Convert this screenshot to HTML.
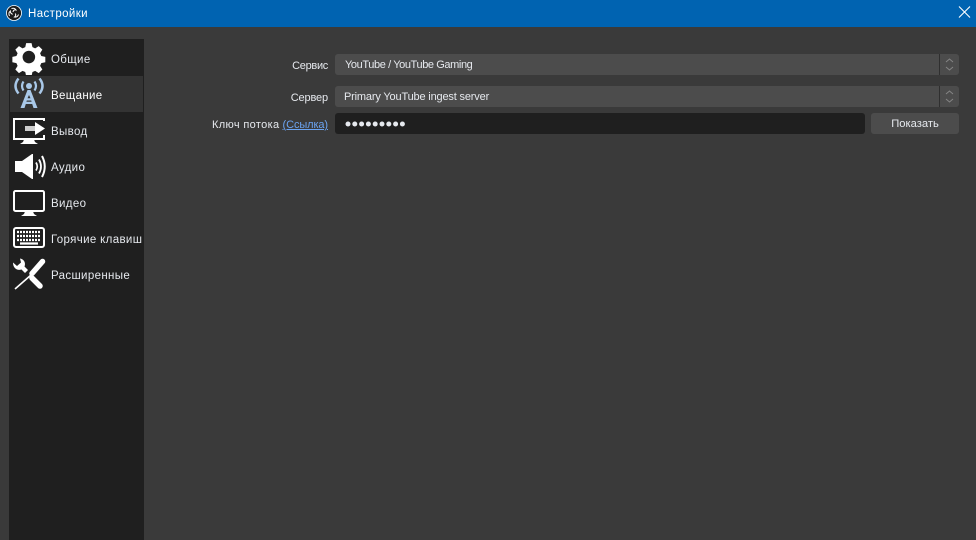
<!DOCTYPE html>
<html><head><meta charset="utf-8"><style>
html,body{margin:0;padding:0;background:#3a3a3a}
#r{position:relative;width:976px;height:540px;overflow:hidden;background:#3a3a3a;font-family:"Liberation Sans",sans-serif;font-size:11.5px;color:#e6e9ee}
#r div{position:absolute;white-space:nowrap}
.t{line-height:16px}
.n{left:51px;letter-spacing:.35px}
.i{position:absolute;left:12px}
.lb{right:648px;text-align:right;font-size:11px}
.c{left:335px;width:624px;height:21px;background:#4c4c4c;border-radius:3px}
.v{left:10px;line-height:23px;font-size:11px}
.s{left:604px;top:0;width:1px;height:21px;background:#2f2f2f}
</style></head><body><div id="r">
<div style="left:0;top:0;width:976px;height:27px;background:#0063b1"></div>
<svg class="i" style="left:6px;top:5px" width="16" height="16" viewBox="0 0 16 16"><circle cx="8" cy="8" r="7.5" fill="#1c1c1c" stroke="#fff" stroke-width=".8"/><g fill="none" stroke="#fff" stroke-width="1"><path d="M5.500 3.500q3-1 4.500 1.500q-2.500-.5-3 2"/><path d="M12.500 9.500q-1 3-4 2.500q2-1.500 .8-3.500"/><path d="M3.500 11q-1.500-3 .8-5q0 2.500 2.500 3.300"/></g></svg>
<div class="t" style="left:28px;top:6px;color:#fff;font-size:11.5px;letter-spacing:.4px">Настройки</div>
<svg class="i" style="left:958px;top:6px" width="13" height="13" viewBox="0 0 13 13"><path d="M1 .5l11 11M12 .5l-11 11" stroke="#fff" stroke-width="1.100"/></svg>

<div style="left:9px;top:39px;width:135px;height:501px;background:#1f1f1f"></div>
<div style="left:10px;top:76px;width:133px;height:36px;background:#333"></div>

<svg class="i" style="left:12px;top:41px" width="34" height="34" viewBox="0 0 34 34"><path fill="#fff" fill-rule="evenodd" d="M13.500 1h6l1 4.500 3 1.300 4-2.500 4 4-2.500 4 1.300 3 4.500 1v6l-4.500 1-1.300 3 2.500 4-4 4-4-2.500-3 1.300-1 4.500h-6l-1-4.500-3-1.300-4 2.500-4-4 2.500-4-1.300-3-4.500-1v-6l4.500-1 1.300-3-2.500-4 4-4 4 2.500 3-1.300zM16.500 9.500a7 7 0 1 0 .01 0z" transform="translate(2 1.200) scale(.9)"/></svg>

<svg class="i" style="left:12px;top:77px" width="34" height="34" viewBox="0 0 34 34" fill="none" stroke="#a9c8e8"><circle cx="17" cy="9" r="3" fill="#a9c8e8" stroke="none"/><path stroke-width="2.200" d="M11.500 4.500q-3 4.500 0 9M22.500 4.500q3 4.500 0 9"/><path stroke-width="2.500" d="M6.500 1.500q-6 7.500 0 15M27.500 1.500q6 7.500 0 15"/><path fill="#a9c8e8" stroke="none" fill-rule="evenodd" d="M15.500 13h3l7 18h-4l-1.300-4h-6.400l-1.300 4h-4zM17 18l-1.500 3.200h3zM14.800 23.500l-.4 1.200h5.200l-.4-1.200z"/></svg>

<svg class="i" style="left:12px;top:113px" width="34" height="34" viewBox="0 0 34 34"><path fill="none" stroke="#fff" stroke-width="2" d="M32 8V6H2v20h30v-4"/><path fill="#fff" d="M12 26.500h10l1 2.500 3 2H8l3-2z"/><path fill="#cfcfcf" d="M13 13h10v5H13z"/><path fill="#fff" d="M23 9l10 6.500-10 6.500z"/></svg>

<svg class="i" style="left:12px;top:149px" width="34" height="34" viewBox="0 0 34 34"><path fill="#fff" d="M3 12h7L20 5h1v25h-1L10 23H3z"/><g fill="none" stroke="#fff"><path stroke-width="1.700" d="M24 13.500q2.500 4 0 8"/><path stroke-width="1.800" d="M27 10.500q4 7 0 14"/><path stroke-width="2" d="M30 7q5.500 10.500 0 21"/></g></svg>

<svg class="i" style="left:12px;top:185px" width="34" height="34" viewBox="0 0 34 34"><rect x="2" y="6" width="30" height="20" rx="1.500" fill="none" stroke="#fff" stroke-width="2"/><path fill="#fff" d="M13 26.500h8l1 2.500 3 2H9l3-2z"/></svg>

<svg class="i" style="left:12px;top:221px" width="34" height="34" viewBox="0 0 34 34"><rect x="2" y="7" width="30" height="19" rx="2" fill="none" stroke="#fff" stroke-width="2"/><path stroke="#fff" stroke-width="2.300" stroke-dasharray="2 1" fill="none" d="M5 11h24M5 15h24M5 19h24"/><path stroke="#fff" stroke-width="2.300" fill="none" d="M8 22.500h18"/></svg>

<svg class="i" style="left:12px;top:257px" width="34" height="34" viewBox="0 0 34 34"><path fill="#fff" d="M8 1.500C12 2 14 6 12.500 9.500L16 13l-3 3-3.500-3.500C5 14 1 11 1 5.500L5 9l4-3.500z"/><path stroke="#fff" stroke-width="5.500" stroke-linecap="round" d="M20 21l8 8"/><path stroke="#fff" stroke-width="5.500" stroke-linecap="round" d="M30.500 4.500L20 16.500"/><path stroke="#fff" stroke-width="1.600" d="M19 18L3 32"/></svg>

<div class="t n" style="top:52px">Общие</div>
<div class="t n" style="top:88px;color:#fff">Вещание</div>
<div class="t n" style="top:124px">Вывод</div>
<div class="t n" style="top:160px">Аудио</div>
<div class="t n" style="top:196px">Видео</div>
<div class="t n" style="top:232px;width:92px;overflow:hidden">Горячие клавиши</div>
<div class="t n" style="top:268px">Расширенные</div>

<div class="t lb" style="top:58px;letter-spacing:-.3px">Сервис</div>
<div class="t lb" style="top:90px;letter-spacing:-.15px">Сервер</div>
<div class="t lb" style="top:117px"><span style="letter-spacing:.35px">Ключ потока</span> <span style="color:#6ba4f2;text-decoration:underline;letter-spacing:-.1px">(Ссылка)</span></div>

<div class="c" style="top:54px"><div class="v" style="letter-spacing:-.4px">YouTube / YouTube Gaming</div><div class="s"></div>
<svg style="position:absolute;left:609px;top:3px" width="11" height="15" viewBox="0 0 11 15" fill="none" stroke="#858585"><path d="M2 5l3.500-3L9 5M2 10l3.500 3L9 10"/></svg></div>
<div class="c" style="top:86px"><div class="v" style="left:9px;letter-spacing:-.17px">Primary YouTube ingest server</div><div class="s"></div>
<svg style="position:absolute;left:609px;top:3px" width="11" height="15" viewBox="0 0 11 15" fill="none" stroke="#858585"><path d="M2 5l3.500-3L9 5M2 10l3.500 3L9 10"/></svg></div>

<div style="left:335px;top:113px;width:530px;height:21px;background:#1f1f1f;border-radius:3px"></div>
<svg style="position:absolute;left:345px;top:120px" width="62" height="8" fill="#e6e9ee"><circle cx="3" cy="4" r="2.500"/><circle cx="9.800" cy="4" r="2.500"/><circle cx="16.600" cy="4" r="2.500"/><circle cx="23.400" cy="4" r="2.500"/><circle cx="30.200" cy="4" r="2.500"/><circle cx="37" cy="4" r="2.500"/><circle cx="43.800" cy="4" r="2.500"/><circle cx="50.600" cy="4" r="2.500"/><circle cx="57.400" cy="4" r="2.500"/></svg>

<div style="left:871px;top:113px;width:88px;height:21px;background:#4c4c4c;border-radius:3px;text-align:center;line-height:23px;font-size:11.2px">Показать</div>
</div></body></html>
